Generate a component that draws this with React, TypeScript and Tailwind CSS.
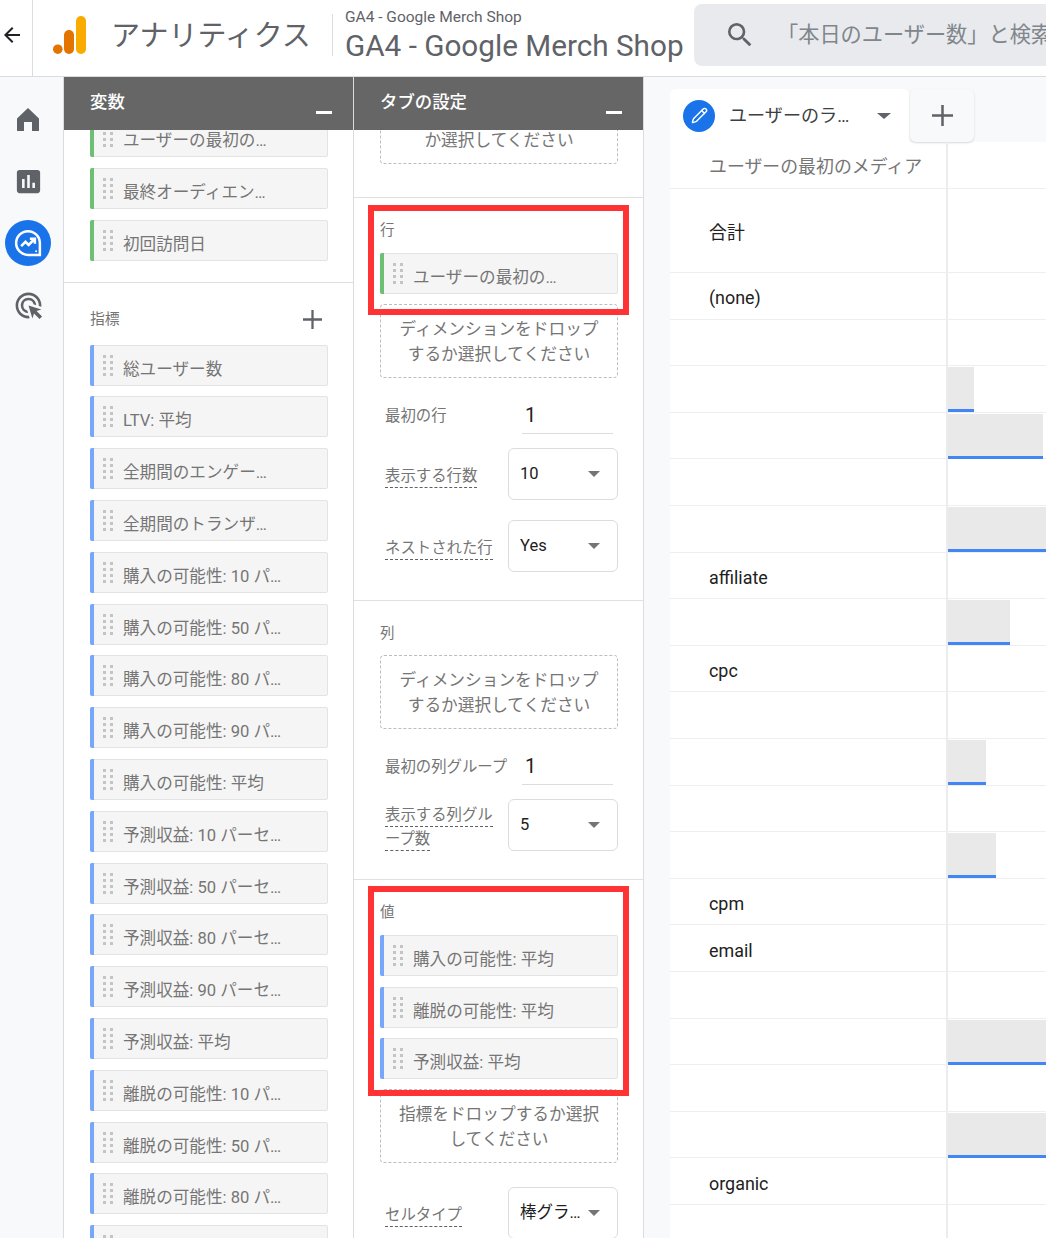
import { Pencil } from "lucide-react";
import { MdAdsClick, MdArrowBack, MdInsertChart, MdSearch } from "react-icons/md";

const dimensions = ["最終オーディエン…", "初回訪問日"];
const metrics = [
  "総ユーザー数",
  "LTV: 平均",
  "全期間のエンゲー…",
  "全期間のトランザ…",
  "購入の可能性: 10 パ…",
  "購入の可能性: 50 パ…",
  "購入の可能性: 80 パ…",
  "購入の可能性: 90 パ…",
  "購入の可能性: 平均",
  "予測収益: 10 パーセ…",
  "予測収益: 50 パーセ…",
  "予測収益: 80 パーセ…",
  "予測収益: 90 パーセ…",
  "予測収益: 平均",
  "離脱の可能性: 10 パ…",
  "離脱の可能性: 50 パ…",
  "離脱の可能性: 80 パ…",
  "",
];

// label, bar width in px (0 = no bar)
const rows: [string, number][] = [
  ["(none)", 0],
  ["", 0],
  ["", 26],
  ["", 95],
  ["", 0],
  ["", 120],
  ["affiliate", 0],
  ["", 62],
  ["cpc", 0],
  ["", 0],
  ["", 38],
  ["", 0],
  ["", 48],
  ["cpm", 0],
  ["email", 0],
  ["", 0],
  ["", 120],
  ["", 0],
  ["", 120],
  ["organic", 0],
  ["", 0],
];

function Grip() {
  return (
    <span className="grid grid-cols-2 gap-x-[4px] gap-y-[3px] w-[10px] flex-none">
      {Array.from({ length: 8 }).map((_, i) => (
        <span key={i} className="w-[3px] h-[3px] bg-[#c4c4c4]" />
      ))}
    </span>
  );
}

function Chip({ label, color }: { label: string; color: "green" | "blue" }) {
  return (
    <div className="relative flex items-center h-[41px] flex-none bg-[#f5f5f5] border border-[#e3e3e3] rounded-[2px] pl-[12px]">
      <span className={color === "green" ? "absolute left-[-1px] top-[-1px] bottom-[-1px] w-[4px] bg-[#6dbf73] rounded-l-[2px]" : "absolute left-[-1px] top-[-1px] bottom-[-1px] w-[4px] bg-[#76a7fa] rounded-l-[2px]"} />
      <Grip />
      <span className="ml-[10px] mt-[10px] text-[16.6px] text-[#757575] whitespace-nowrap">{label}</span>
    </div>
  );
}

function Dropzone({ lines, className }: { lines: string[]; className?: string }) {
  return (
    <div className={`h-[74px] flex-none border border-dashed border-[#bdbdbd] rounded-[4px] pt-[12px] text-center text-[16.7px] leading-[25px] text-[#757575] ${className ?? ""}`}>
      {lines.map((l) => (
        <div key={l}>{l}</div>
      ))}
    </div>
  );
}

function PanelHeader({ title }: { title: string }) {
  return (
    <div className="relative flex-none h-[53px] bg-[#666666] pl-[26px] pt-[13px] text-[17.4px] font-medium leading-[24px] text-white">
      {title}
      <span className="absolute right-[21px] bottom-[16px] w-[16px] h-[3px] bg-white" />
    </div>
  );
}

function PlusIcon({ size }: { size: number }) {
  return (
    <svg width={size} height={size} viewBox="0 0 20 20" stroke="#5f6368" strokeWidth="2.4">
      <path d="M10 0v20M0 10h20" />
    </svg>
  );
}

function NumberRow({ label }: { label: string }) {
  return (
    <div className="flex items-center h-[36px] mt-[20px] pl-[5px]">
      <span className="w-[137px] flex-none pt-[2px] text-[15.4px] text-[#757575] whitespace-nowrap">{label}</span>
      <span className="w-[91px] h-full flex items-center pl-[3px] pb-[2px] border-b border-[#dadce0] text-[20px] text-[#212121]">1</span>
    </div>
  );
}

function SelectRow({ label, value, top }: { label: string; value: string; top: string }) {
  return (
    <div className={`flex items-center h-[52px] pl-[5px] ${top}`}>
      <div className="w-[123px] flex-none pr-[13px] pt-[4px] text-[15.4px] leading-[24px] text-[#757575]">
        <span className="border-b border-dashed border-[#616161] pb-[2px]">{label}</span>
      </div>
      <div className="w-[110px] h-full flex-none flex items-center justify-between pl-[11px] pr-[17px] border border-[#dadce0] rounded-[6px] text-[16.5px] text-[#212121]">
        <span className="whitespace-nowrap">{value}</span>
        <span className="w-0 h-0 border-x-[6px] border-x-transparent border-t-[6px] border-t-[#757575]" />
      </div>
    </div>
  );
}

function SectionLabel({ text, gap }: { text: string; gap: string }) {
  return <div className={`h-[16px] text-[14.5px] leading-[16px] text-[#757575] ${gap}`}>{text}</div>;
}

export default function App() {
  return (
    <div className="w-[1046px] h-[1238px] flex flex-col overflow-hidden bg-[#f8f9fa] font-[Roboto,'Noto_Sans_CJK_JP',sans-serif]">
      <header className="flex-none h-[77px] flex items-center pb-[6px] bg-white border-b border-[#dadce0]">
        <div className="w-[33px] h-[76px] flex-none self-start border-r border-[#dadce0] pb-[6px] flex items-center">
          <MdArrowBack size={24} className="text-[#202124]" />
        </div>
        <svg width="33" height="38" viewBox="0 0 33 38" className="ml-[20px] flex-none">
          <circle cx="4.8" cy="33.2" r="4.8" fill="#e37400" />
          <rect x="11" y="14" width="10" height="24" rx="5" fill="#e37400" />
          <rect x="23" y="0" width="10" height="38" rx="5" fill="#f9ab00" />
        </svg>
        <div className="ml-[25px] w-[221px] flex-none pt-[3px] text-[29px] text-[#5f6368] whitespace-nowrap">アナリティクス</div>
        <div className="w-px h-[42px] flex-none bg-[#dadce0]" />
        <div className="ml-[12px] w-[349px] flex-none text-[#5f6368] whitespace-nowrap">
          <div className="text-[15.5px] leading-[18px] mb-[3px]">GA4 - Google Merch Shop</div>
          <div className="text-[29.7px] leading-[34px]">GA4 - Google Merch Shop</div>
        </div>
        <div className="h-[62px] w-[400px] flex-none pl-[30px] flex items-center bg-[#e8eaed] rounded-[8px] whitespace-nowrap text-[21.2px] text-[#80868b]">
          <MdSearch size={32} className="flex-none text-[#5f6368]" />
          <span className="ml-[21px]">「本日のユーザー数」と検索</span>
        </div>
      </header>

      <div className="flex-1 min-h-0 flex">
        <nav className="w-[64px] flex-none border-r border-[#dadce0] pt-[11px]">
          <div className="w-[55px] h-[62px] flex items-center justify-center">
            <svg width="22" height="23" viewBox="0 0 22 23" fill="#5f6368">
              <path d="M11 0L22 10.5V23H15V14H7V23H0V10.5Z" />
            </svg>
          </div>
          <div className="w-[56px] h-[62px] flex items-center justify-center">
            <MdInsertChart size={31} className="text-[#5f6368]" />
          </div>
          <div className="w-[56px] h-[62px] flex items-center justify-center">
            <div className="w-[46px] h-[46px] rounded-full bg-[#1a73e8] flex items-center justify-center">
              <svg width="30" height="30" viewBox="0 0 24 24" fill="none" stroke="#fff" strokeWidth="2">
                <path d="M12 2.5a9.5 9.5 0 1 0 0 19h9.5V12A9.5 9.5 0 0 0 12 2.5z" />
                <path d="M6.5 14.5l3.5-3.5 2.5 2.5 4.5-4.5M13.5 8.5H17.5V12.5" />
                <circle cx="18.5" cy="18.5" r="0.8" fill="#fff" stroke="none" />
              </svg>
            </div>
          </div>
          <div className="w-[56px] h-[62px] flex items-center justify-center">
            <MdAdsClick size={31} className="text-[#5f6368]" />
          </div>
        </nav>

        <section className="w-[290px] flex-none flex flex-col bg-white border-r border-[#dadce0]">
          <PanelHeader title="変数" />
          <div className="flex-1 min-h-0 overflow-hidden">
            <div className="flex flex-col gap-[10.8px] -mt-[14px] pl-[26px] pr-[25px] pb-[21px] border-b border-[#e0e0e0]">
              <Chip label="ユーザーの最初の…" color="green" />
              {dimensions.map((d) => (
                <Chip key={d} label={d} color="green" />
              ))}
            </div>
            <div className="pl-[26px] pr-[25px]">
              <div className="flex items-center justify-between h-[62px] pt-[11px]">
                <span className="text-[14.8px] text-[#757575]">指標</span>
                <span className="mr-[6px] flex">
                  <PlusIcon size={19} />
                </span>
              </div>
              <div className="flex flex-col gap-[10.8px]">
                {metrics.map((m, i) => (
                  <Chip key={i} label={m} color="blue" />
                ))}
              </div>
            </div>
          </div>
        </section>

        <section className="w-[290px] flex-none flex flex-col bg-white border-r border-[#dadce0]">
          <PanelHeader title="タブの設定" />
          <div className="flex-1 min-h-0 overflow-hidden">
            <div className="-mt-[40px] pl-[26px] pr-[25px] pb-[33px] border-b border-[#e0e0e0]">
              <Dropzone lines={["\u00a0", "か選択してください"]} />
            </div>
            <div className="relative pt-[25px] pl-[26px] pr-[25px] pb-[28px] border-b border-[#e0e0e0]">
              <SectionLabel text="行" gap="mb-[14px]" />
              <Chip label="ユーザーの最初の…" color="green" />
              <Dropzone className="mt-[10px]" lines={["ディメンションをドロップ", "するか選択してください"]} />
              <NumberRow label="最初の行" />
              <SelectRow label="表示する行数" value="10" top="mt-[14px]" />
              <SelectRow label="ネストされた行" value="Yes" top="mt-[20px]" />
              <div className="absolute left-[14px] top-[7px] w-[261px] h-[110px] border-[6px] border-[#ff3333]" />
            </div>
            <div className="pt-[25px] pl-[26px] pr-[25px] pb-[28px] border-b border-[#e0e0e0]">
              <SectionLabel text="列" gap="mb-[13px]" />
              <Dropzone lines={["ディメンションをドロップ", "するか選択してください"]} />
              <NumberRow label="最初の列グループ" />
              <SelectRow label="表示する列グループ数" value="5" top="mt-[14px]" />
            </div>
            <div className="relative pt-[25px] pl-[26px] pr-[25px]">
              <SectionLabel text="値" gap="mb-[14px]" />
              <div className="flex flex-col gap-[10.6px]">
                <Chip label="購入の可能性: 平均" color="blue" />
                <Chip label="離脱の可能性: 平均" color="blue" />
                <Chip label="予測収益: 平均" color="blue" />
              </div>
              <Dropzone className="mt-[10px]" lines={["指標をドロップするか選択", "してください"]} />
              <SelectRow label="セルタイプ" value="棒グラ…" top="mt-[24px]" />
              <div className="absolute left-[14px] top-[6px] w-[261px] h-[210px] border-[6px] border-[#ff3333]" />
            </div>
          </div>
        </section>

        <main className="flex-1 min-w-0 ml-[26px] overflow-hidden">
          <div className="flex h-[65px] pt-[12px]">
            <div className="w-[239px] h-[53px] flex-none flex items-center pl-[13px] bg-white rounded-t-[6px]">
              <span className="w-[32px] h-[32px] flex-none rounded-full bg-[#1a73e8] flex items-center justify-center">
                <Pencil size={17} color="#fff" strokeWidth={2} />
              </span>
              <span className="ml-[14px] text-[18.1px] text-[#3c4043] whitespace-nowrap">ユーザーのラ…</span>
              <span className="ml-[28px] w-0 h-0 border-x-[7px] border-x-transparent border-t-[6px] border-t-[#5f6368]" />
            </div>
            <div className="ml-px w-[64px] h-[53px] flex-none flex items-center justify-center bg-[#f8f9fa] rounded-[6px] shadow-[0_1px_2px_rgba(60,64,67,0.2)]">
              <PlusIcon size={21} />
            </div>
          </div>
          <div className="bg-white">
            <div className="flex h-[47px] border-b border-[#eeeeee]">
              <div className="w-[278px] flex-none border-r-2 border-[#ececec] pl-[39px] pt-[4px] flex items-center text-[17.9px] text-[#757575] whitespace-nowrap">ユーザーの最初のメディア</div>
            </div>
            <div className="flex h-[84px] border-b border-[#eeeeee]">
              <div className="w-[278px] flex-none border-r-2 border-[#ececec] pl-[39px] pt-[5px] flex items-center text-[17.9px] text-[#212121]">合計</div>
            </div>
            {rows.map(([label, bar], i) => (
              <div key={i} className="flex h-[46.6px] border-b border-[#eeeeee]">
                <div className="w-[278px] flex-none border-r-2 border-[#ececec] pl-[39px] pt-[6px] flex items-center text-[17.9px] text-[#212121]">{label}</div>
                {bar > 0 && (
                  <div className="mt-px h-[45px] bg-[#e9e9e9] border-b-[3px] border-[#4285f4]" style={{ width: bar }} />
                )}
              </div>
            ))}
          </div>
        </main>
      </div>
    </div>
  );
}
